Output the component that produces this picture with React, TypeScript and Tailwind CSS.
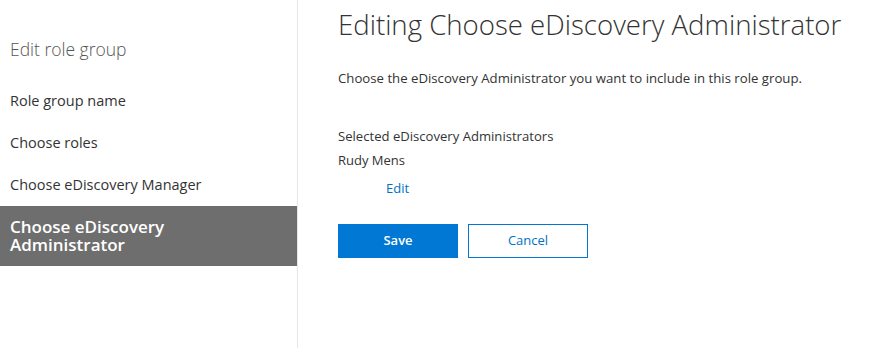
export default function App() {
  return (
    <div
      className="flex w-[883px] h-[348px] bg-white text-[#333]"
      style={{ fontFamily: '"Open Sans", "Noto Sans", sans-serif' }}
    >
      {/* Steps sidebar */}
      <div className="w-[298px] h-full border-r border-[#e6e6e6] flex flex-col pt-[37px]">
        <div className="px-[10px] text-[17.5px] leading-[24px] text-[#555] font-light">Edit role group</div>
        <div className="mt-[19px] flex flex-col">
          <div className="h-[42px] px-[10px] flex items-center text-[14.5px] text-[#333]">Role group name</div>
          <div className="h-[42px] px-[10px] flex items-center text-[14.5px] text-[#333]">Choose roles</div>
          <div className="h-[42px] px-[10px] flex items-center text-[14.5px] text-[#333]">Choose eDiscovery Manager</div>
          <div className="w-[297px] h-[60px] px-[10px] flex items-center bg-[#6e6e6e] text-white font-semibold text-[17px] leading-[18px]">
            <p>
              Choose eDiscovery
              <br />
              Administrator
            </p>
          </div>
        </div>
      </div>

      {/* Form */}
      <div className="flex-1 pl-[40px] pt-[4px]">
        <h1 className="text-[27.6px] leading-[40px] font-light text-[#333]">Editing Choose eDiscovery Administrator</h1>
        <p className="mt-[25px] text-[13.2px] leading-[18px]">
          Choose the eDiscovery Administrator you want to include in this role group.
        </p>
        <div className="mt-[40px] text-[13.1px] leading-[18px]">Selected eDiscovery Administrators</div>
        <div className="mt-[6px] text-[13px] leading-[18px]">Rudy Mens</div>
        <div className="mt-[10px] pl-[48px] text-[13px] leading-[18px] text-[#0072c6]">Edit</div>
        <div className="mt-[27px] flex gap-[10px]">
          <button className="w-[120px] h-[34px] bg-[#0078d4] text-white text-[13px] font-semibold">Save</button>
          <button className="w-[120px] h-[34px] border border-[#0078d4] text-[#0072c6] text-[13px]">Cancel</button>
        </div>
      </div>
    </div>
  );
}
